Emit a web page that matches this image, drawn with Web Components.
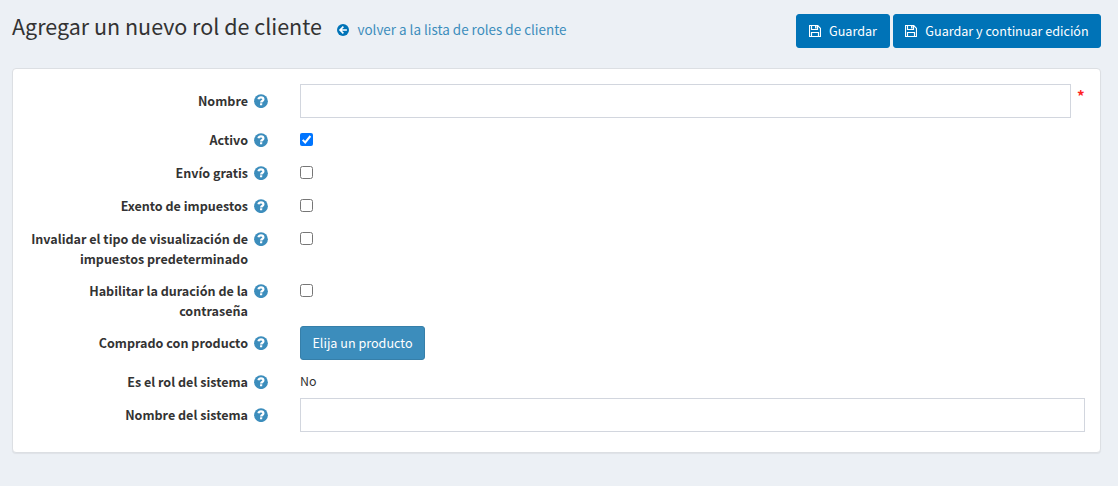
<!DOCTYPE html>
<html lang="es">
<head>
<meta charset="utf-8">
<title>Agregar un nuevo rol de cliente</title>
<style>
body{margin:0;background:#ecf0f5;color:#333;font-family:"Noto Sans CJK SC","Noto Sans",sans-serif;font-size:12.6px;line-height:20px}
</style>
</head>
<body>
<role-page></role-page>
<script>
const define = (name, html) => {
  const template = document.createElement('template');
  template.innerHTML = html;
  customElements.define(name, class extends HTMLElement {
    constructor() {
      super();
      this.attachShadow({mode: 'open'}).append(template.content.cloneNode(true));
    }
  });
};

define('help-icon', `
<style>:host{display:block;width:14px;height:20px}svg{display:block;margin-top:3px}</style>
<svg width="14" height="14" viewBox="0 0 14 14"><circle cx="7" cy="7.2" r="6.9" fill="#3c8dbc"/><path d="M4.4 5.3C4.8 3.9 5.8 3.4 7 3.4c1.4 0 2.4.8 2.4 2 0 1.6-2.2 1.5-2.3 3.1" fill="none" stroke="#fff" stroke-width="2.2"/><rect x="6" y="9.2" width="2.2" height="2.1" rx=".2" fill="#fff"/></svg>`);

define('save-icon', `
<style>:host{display:block}svg{display:block}</style>
<svg width="12" height="12" viewBox="0 0 12 12" fill="none" stroke="#fff" stroke-width="1.15"><path d="M.5.5H8.6L11.5 3.4V11.5H.5Z" stroke-linejoin="round"/><path d="M2.5.5V4.5H8.5V.5M2.5 11.5V7.5H9.5V11.5"/><path d="M6.8 1V3.6" stroke-width="1.5"/></svg>`);

define('back-link', `
<style>:host{display:block}a{display:flex;align-items:center;gap:9px;color:#3c8dbc;text-decoration:none;font-size:13.44px;line-height:20px;white-space:nowrap}svg{display:block}span{margin-top:-1px}</style>
<a href="#"><svg width="12" height="12" viewBox="0 0 12 12"><circle cx="6" cy="6" r="6" fill="#0073b7"/><path d="M6.4 2.6L3 6l3.4 3.4M3.3 6H9.9" fill="none" stroke="#fff" stroke-width="1.6"/></svg><span><slot></slot></span></a>`);

define('action-button', `
<style>:host{display:block}
button{box-sizing:border-box;display:flex;align-items:center;justify-content:center;gap:8px;width:var(--w);height:34px;margin:0;padding:0 0 1px;border:1px solid var(--edge,#0073b7);border-radius:3px;background:var(--fill,#0073b7);color:#fff;font:inherit;line-height:20px;white-space:nowrap}
</style>
<button type="button"><slot name="icon"></slot><span><slot></slot></span></button>`);

define('check-box', `
<style>:host{display:block;padding-top:10px}svg{display:block}.on{display:none}:host([checked]) .on{display:block}:host([checked]) .off{display:none}</style>
<svg class="off" width="13" height="13"><rect x=".5" y=".5" width="12" height="12" rx="2" fill="#fff" stroke="#767676"/></svg>
<svg class="on" width="13" height="13"><rect width="13" height="13" rx="2" fill="#0075ff"/><path d="M2.7 6.9L5.2 9.4L10.4 3" fill="none" stroke="#fff" stroke-width="2"/></svg>`);

define('text-field', `
<style>:host{display:flex;gap:6px}input{box-sizing:border-box;flex:1;min-width:0;height:34px;margin:0;padding:6px 12px;border:1px solid #d2d6de;border-radius:0;background:#fff;font:inherit;outline:0}
i{display:none;width:8px;color:#f22;font-style:normal;font-weight:700;font-size:15px;padding-top:2px}:host([required]) i{display:block}</style>
<input type="text"><i>*</i>`);

define('form-row', `
<style>:host{display:grid;grid-template-columns:255px 1fr;column-gap:32px;min-height:28px;margin-bottom:5px}
.label{display:flex;justify-content:flex-end;gap:6px;padding-top:7px;font-size:12.55px;font-weight:700;text-align:right;white-space:nowrap}</style>
<div class="label"><slot name="label"></slot><help-icon></help-icon></div><div><slot></slot></div>`);

define('form-card', `
<style>:host{display:block;box-sizing:border-box;background:#fff;border:1px solid #dcdfe3;border-radius:4px;box-shadow:0 1px 1px rgba(0,0,0,.06);padding:15px 15px 15px 0}</style><slot></slot>`);

define('page-header', `
<style>:host{display:flex;align-items:flex-start;height:54px}
h1{margin:-1px 0 0;font-size:21.5px;font-weight:400;line-height:26px;white-space:nowrap;width:324.5px}
back-link{padding-top:6px;flex:1}.actions{display:flex;gap:3px}</style>
<h1>Agregar un nuevo rol de cliente</h1><back-link>volver a la lista de roles de cliente</back-link>
<div class="actions"><action-button style="--w:94px"><save-icon slot="icon"></save-icon>Guardar</action-button><action-button style="--w:208px"><save-icon slot="icon"></save-icon>Guardar y continuar edición</action-button></div>`);

define('role-page', `
<style>:host{display:block;box-sizing:border-box;height:486px;padding:14px 17px 0 12px;overflow:hidden}
.value{display:block;padding-top:6px;font-size:12.4px}</style>
<page-header></page-header>
<form-card>
<form-row><span slot="label">Nombre</span><text-field required></text-field></form-row>
<form-row><span slot="label">Activo</span><check-box checked></check-box></form-row>
<form-row><span slot="label">Envío gratis</span><check-box></check-box></form-row>
<form-row><span slot="label">Exento de impuestos</span><check-box></check-box></form-row>
<form-row><span slot="label">Invalidar el tipo de visualización de<br>impuestos predeterminado</span><check-box></check-box></form-row>
<form-row><span slot="label">Habilitar la duración de la<br>contraseña</span><check-box></check-box></form-row>
<form-row><span slot="label">Comprado con producto</span><action-button style="--w:125px;--fill:#3c8dbc;--edge:#367fa9">Elija un producto</action-button></form-row>
<form-row><span slot="label">Es el rol del sistema</span><span class="value">No</span></form-row>
<form-row><span slot="label">Nombre del sistema</span><text-field></text-field></form-row>
</form-card>`);
</script>
</body>
</html>
